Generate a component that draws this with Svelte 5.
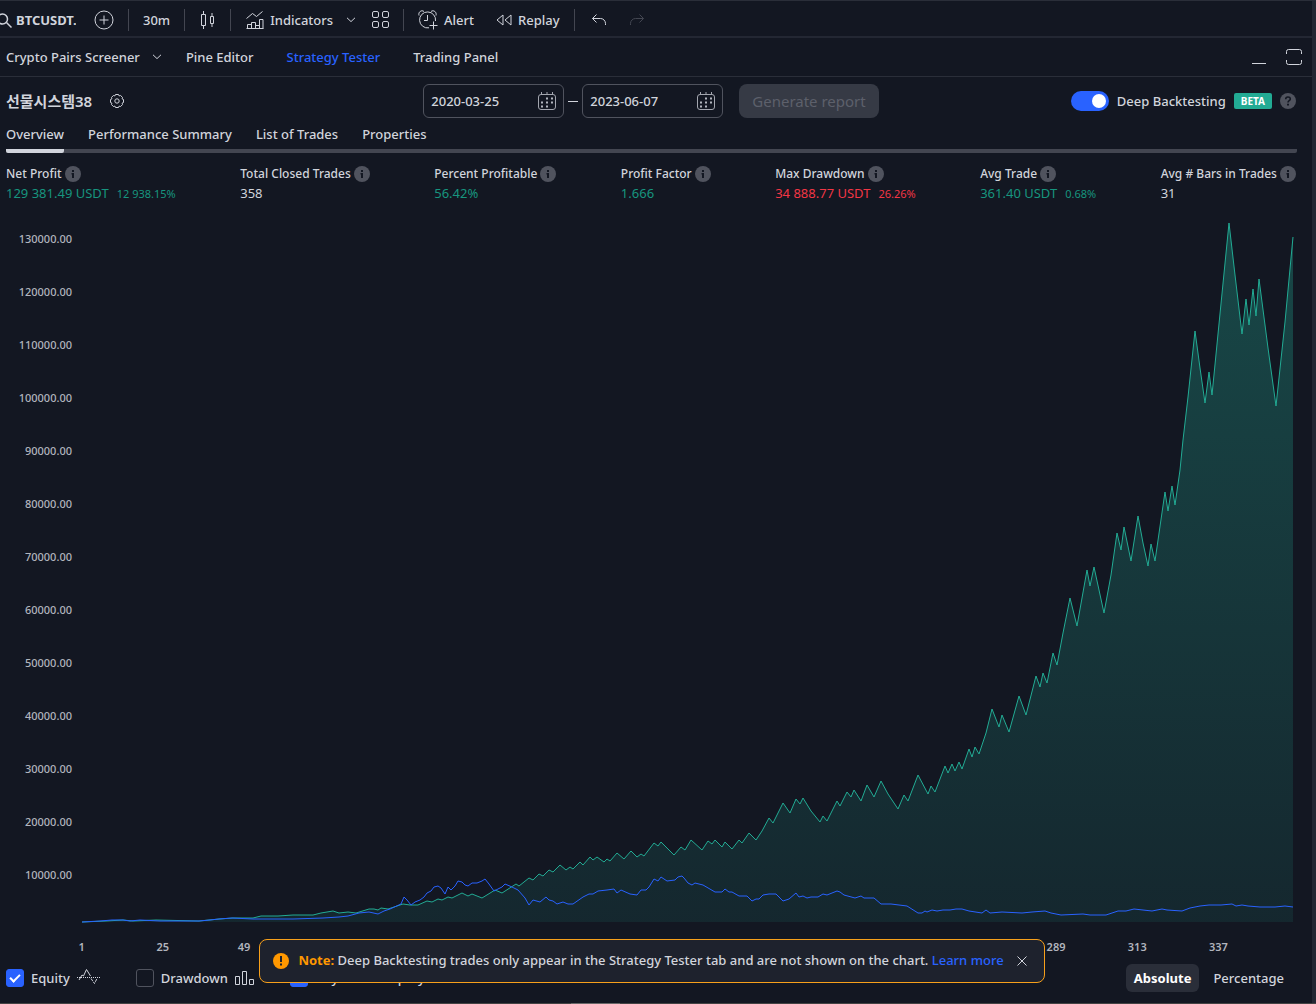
<script lang="ts">
  const metrics = [
    { label: 'Net Profit', value: '129 381.49 USDT', extra: '12 938.15%', tone: 'up' },
    { label: 'Total Closed Trades', value: '358', extra: '', tone: '' },
    { label: 'Percent Profitable', value: '56.42%', extra: '', tone: 'up' },
    { label: 'Profit Factor', value: '1.666', extra: '', tone: 'up' },
    { label: 'Max Drawdown', value: '34 888.77 USDT', extra: '26.26%', tone: 'down' },
    { label: 'Avg Trade', value: '361.40 USDT', extra: '0.68%', tone: 'up' },
    { label: 'Avg # Bars in Trades', value: '31', extra: '', tone: '' },
  ]

  const reports = ['Overview', 'Performance Summary', 'List of Trades', 'Properties']
  const yTicks = Array.from({ length: 13 }, (_, i) => `${13 - i}0000.00`)
  const xTicks = Array.from({ length: 15 }, (_, i) => 1 + i * 24)

  let report = $state('Overview')
  let unit = $state('Absolute')
  let from = $state('2020-03-25')
  let to = $state('2023-06-07')
  let deep = $state(true)
  let showEquity = $state(true)
  let showDrawdown = $state(false)
  let showHold = $state(true)
  let noteOpen = $state(true)

  const equity =
    '82,922 106,921 123,920 133,921 156,920 199,921 219,919 233,918 253,918 261,916 269,916 278,916 293,915 313,915 321,913 333,911 339,913 348,912 356,913 369,909 374,909 378,910 381,908 388,909 403,904 410,905 418,905 427,901 432,902 438,899 442,900 448,897 452,898 462,893 468,896 472,894 482,898 495,890 502,893 516,884 519,886 529,878 533,880 539,874 543,876 549,870 553,872 560,865 566,870 570,867 573,869 580,862 583,865 590,857 593,860 597,857 604,862 607,859 610,861 617,853 624,859 631,851 637,857 641,854 644,856 654,843 658,846 661,842 674,855 681,847 685,850 691,840 702,850 708,841 712,844 715,840 722,847 725,842 732,849 739,840 742,843 749,833 756,840 762,831 769,818 773,823 783,803 790,813 796,799 800,804 803,798 811,811 820,822 823,816 827,821 837,801 840,806 847,792 851,797 854,790 861,801 867,785 874,797 881,781 888,794 898,809 904,795 908,801 918,775 928,794 931,786 935,792 945,766 948,773 952,764 955,771 959,762 962,769 969,749 972,757 975,747 979,754 986,733 992,709 999,727 1002,715 1009,732 1019,696 1026,715 1036,676 1040,687 1043,673 1047,683 1053,653 1057,665 1063,633 1070,598 1077,626 1087,570 1090,586 1094,567 1104,613 1111,575 1117,533 1121,550 1124,527 1131,561 1138,516 1143,543 1148,566 1151,544 1155,561 1165,492 1168,511 1172,486 1175,505 1180,470 1183,440 1188,397 1195,331 1200,368 1205,403 1209,372 1212,395 1218,334 1229,223 1235,275 1242,334 1246,299 1249,325 1253,289 1256,316 1259,279 1268,348 1276,406 1285,322 1293,237'

  const hold =
    '82,922 100,921 112,920 123,920 130,921 140,920 160,921 199,921 210,920 219,919 232,918 253,919 293,919 323,918 339,917 348,916 359,913 369,912 378,914 384,911 390,909 401,904 404,897 407,900 411,905 415,902 420,900 424,897 427,893 431,891 434,887 438,886 441,888 445,894 448,887 451,890 455,886 458,881 462,882 465,885 468,886 472,883 477,883 482,881 485,879 489,884 494,891 502,887 505,884 512,887 518,890 525,898 529,905 533,900 540,902 546,897 549,900 553,901 557,904 563,902 568,904 573,904 583,897 589,894 593,894 598,891 607,890 614,889 617,893 621,890 630,894 637,895 641,890 646,890 649,887 654,879 658,881 661,877 667,881 675,880 678,877 682,876 684,878 688,883 692,885 695,883 703,885 715,892 722,892 725,889 729,892 732,892 739,896 747,896 752,901 756,899 759,899 763,895 769,894 776,894 780,898 783,901 789,899 796,893 799,897 803,896 807,898 811,897 818,897 823,894 827,895 837,891 840,892 844,895 855,898 861,896 864,898 874,898 881,904 891,904 907,906 918,913 922,913 925,911 927,912 932,910 937,911 943,910 950,910 956,909 962,909 969,911 982,913 986,910 990,913 1002,912 1022,913 1032,912 1045,911 1051,913 1061,915 1083,914 1090,915 1106,915 1118,911 1126,911 1134,909 1152,911 1162,909 1167,910 1182,911 1190,908 1200,906 1209,905 1221,905 1232,904 1236,906 1242,905 1248,906 1260,907 1275,907 1285,906 1293,907'

  const area = `82,922 ${equity} 1293,922`
</script>

{#snippet info()}
  <svg width="16" height="16" viewBox="0 0 16 16" aria-hidden="true">
    <circle cx="8" cy="8" r="8" fill="#50535e" />
    <path d="M7 4h2v2H7zM6.500 7H9v5H7V8.500h-.5z" fill="#131722" />
  </svg>
{/snippet}

{#snippet chevron()}
  <svg width="10" height="6" viewBox="0 0 10 6" fill="none" stroke="currentColor" aria-hidden="true"><path d="M1 .8l4 3.800L9 .8" /></svg>
{/snippet}

{#snippet calendar()}
  <svg width="18" height="19" viewBox="0 0 18 19" fill="none" stroke="#a3a6af" aria-hidden="true">
    <rect x=".5" y="2.500" width="17" height="15" rx="2.500" />
    <path d="M3.500 0v2.500M9 0v2.500M14.500 0v2.500" />
    <path d="M8 6.500h2M13 6.500h2M3 10.500h2M8 10.500h2M13 10.500h2M3 14.500h2M8 14.500h2" stroke-width="2" stroke="#b2b5be" />
  </svg>
{/snippet}

<div class="app">
  <div class="panel">
    <header class="toolbar">
      <button class="symbol">
        <svg width="12" height="16" viewBox="0 0 12 16" fill="none" stroke="currentColor" stroke-width="1.500" aria-hidden="true">
          <circle cx="2.500" cy="7" r="5" />
          <path d="M6.500 10.500l5 5" />
        </svg>
        <span>BTCUSDT.P</span>
      </button>
      <button class="compare" aria-label="Compare symbol">
        <svg width="20" height="20" viewBox="0 0 20 20" fill="none" stroke="currentColor">
          <circle cx="10" cy="10" r="9" />
          <path d="M10 5.500v9M5.500 10h9" />
        </svg>
      </button>
      <span class="sep"></span>
      <button>30m</button>
      <span class="sep"></span>
      <button aria-label="Candles">
        <svg width="17" height="20" viewBox="0 0 17 20" fill="none" stroke="currentColor">
          <path d="M2.500 4.500h4v11h-4zM4.500 1v3.500M4.500 15.500V19M11.500 6.500h3v7h-3zM13 3v3.500M13 13.500V17" />
        </svg>
      </button>
      <span class="sep"></span>
      <button>
        <svg width="19" height="18" viewBox="0 0 19 18" fill="none" stroke="currentColor" aria-hidden="true">
          <path d="M1.500 7.500l6-5 4 3 6-5M2.500 17.500v-4h4v4M6.500 17.500v-6h4v6M10.500 14.500h4v3M14.500 17.500v-9h3.500v9zM1.500 17.500h17" />
        </svg>
        Indicators
      </button>
      <button class="more" aria-label="Favorite indicators">{@render chevron()}</button>
      <button class="layout" aria-label="Templates">
        <svg width="18" height="18" viewBox="0 0 18 18" fill="none" stroke="currentColor">
          <rect x="1.500" y=".5" width="6" height="6" rx="1.500" />
          <rect x="11.500" y=".5" width="6" height="6" rx="1.500" />
          <rect x="1.500" y="10.500" width="6" height="6" rx="1.500" />
          <rect x="11.500" y="10.500" width="6" height="6" rx="1.500" />
        </svg>
      </button>
      <span class="sep"></span>
      <button>
        <svg width="20" height="20" viewBox="0 0 20 20" fill="none" stroke="currentColor" aria-hidden="true">
          <path d="M17.500 11A8 8 0 1 0 11 17.800M1 5.500C0 2 3.500-.5 6 1.500M18 5.500c1-3.500-2.500-6-5-4M9.500 5v5.500H6M15.500 11.500v8M11.500 15.500h8" />
        </svg>
        Alert
      </button>
      <button class="replay">
        <svg width="16" height="12" viewBox="0 0 16 12" fill="none" stroke="currentColor" aria-hidden="true">
          <path d="M7 1v10L1 6zM15 1v10L9 6z" />
        </svg>
        Replay
      </button>
      <span class="sep"></span>
      <button class="undo" aria-label="Undo">
        <svg width="14" height="12" viewBox="0 0 14 12" fill="none" stroke="currentColor">
          <path d="M4.500.5l-4 4 4 4M.5 4.500h8a5 5 0 0 1 5 5V11" />
        </svg>
      </button>
      <button class="redo" aria-label="Redo" disabled>
        <svg width="14" height="12" viewBox="0 0 14 12" fill="none" stroke="currentColor">
          <path d="M9.500.5l4 4-4 4M13.500 4.500h-8a5 5 0 0 0-5 5V11" />
        </svg>
      </button>
    </header>

    <nav class="tabs">
      <button class="screener">Crypto Pairs Screener {@render chevron()}</button>
      <button>Pine Editor</button>
      <button class="active">Strategy Tester</button>
      <button>Trading Panel</button>
      <div class="window">
        <button aria-label="Minimize">
          <svg width="14" height="16" viewBox="0 0 14 16" stroke="currentColor"><path d="M0 14.500h14" /></svg>
        </button>
        <button aria-label="Maximize">
          <svg width="16" height="16" viewBox="0 0 16 16" fill="none" stroke="currentColor">
            <path d="M.5 5V2.500a2 2 0 0 1 2-2h11a2 2 0 0 1 2 2V5M.5 11v2.500a2 2 0 0 0 2 2h11a2 2 0 0 0 2-2V11" />
          </svg>
        </button>
      </div>
    </nav>

    <section class="head">
      <div class="strategy">
        <h1>선물시스템38</h1>
        <button aria-label="Settings">
          <svg width="14" height="14" viewBox="0 0 14 14" fill="none" stroke="currentColor">
            <path
              d="M5.500.5h3l.6 1.400 1.500-.4 1.900 1.900-.4 1.500 1.400.6v3l-1.400.6.4 1.500-1.900 1.900-1.500-.4-.6 1.400h-3l-.6-1.400-1.500.4-1.900-1.900.4-1.500L.5 8.500v-3l1.400-.6-.4-1.500 1.900-1.900 1.500.4z"
            />
            <circle cx="7" cy="7" r="2.200" />
          </svg>
        </button>
      </div>
      <div class="range">
        <label class="date">
          <input type="text" aria-label="Start date" bind:value={from} />
          {@render calendar()}
        </label>
        <span class="dash"></span>
        <label class="date">
          <input type="text" aria-label="End date" bind:value={to} />
          {@render calendar()}
        </label>
        <button class="generate" disabled>Generate report</button>
      </div>
      <div class="deep">
        <label>
          <input class="switch" type="checkbox" role="switch" bind:checked={deep} />
          Deep Backtesting
        </label>
        <span class="beta">BETA</span>
        <svg width="16" height="16" viewBox="0 0 16 16" fill="none" aria-hidden="true">
          <circle cx="8" cy="8" r="8" fill="#50535e" />
          <path d="M5.700 6.200C5.700 3.200 10.300 3.300 10.300 6c0 1.700-2.300 1.700-2.300 3.500" stroke="#131722" stroke-width="1.600" />
          <path d="M7 10.800h2v1.800H7z" fill="#131722" />
        </svg>
      </div>
    </section>

    <nav class="reports">
      {#each reports as name}
        <button class:current={report === name} onclick={() => (report = name)}>{name}</button>
      {/each}
    </nav>

    <dl class="metrics">
      {#each metrics as m}
        <div>
          <dt>{m.label} {@render info()}</dt>
          <dd class={m.tone}>{m.value}{#if m.extra}<small>{m.extra}</small>{/if}</dd>
        </div>
      {/each}
    </dl>

    <div class="chart">
      <div class="yAxis">
        {#each yTicks as tick}
          <span>{tick}</span>
        {/each}
      </div>
      <svg class="plot" viewBox="82 212 1211 710" preserveAspectRatio="none" role="img" aria-label="Equity chart">
        <defs>
          <linearGradient id="equityFill" gradientUnits="userSpaceOnUse" x1="0" y1="223" x2="0" y2="922">
            <stop offset="0" stop-color="#22ab94" stop-opacity="0.33" />
            <stop offset="1" stop-color="#22ab94" stop-opacity="0.11" />
          </linearGradient>
        </defs>
        {#if showEquity}
          <polygon points={area} fill="url(#equityFill)" />
          <polyline points={equity} stroke="#22ab94" />
        {/if}
        {#if showHold}
          <polyline points={hold} stroke="#2962ff" />
        {/if}
      </svg>
    </div>
    <div class="xAxis">
      {#each xTicks as tick}
        <span>{tick}</span>
      {/each}
    </div>

    <footer class="legend">
      <label>
        <input class="check" type="checkbox" bind:checked={showEquity} />
        Equity
        <svg width="24" height="20" viewBox="0 0 24 20" fill="none" stroke="currentColor" aria-hidden="true">
          <path d="M0 9.500h24" stroke-dasharray="1 1" />
          <path d="M2 12l3-5 1.500 1L9.500 1.500l4 6.500" />
          <path d="M14 10.500l3.500 5 2.500-5" stroke-dasharray="3 1" />
        </svg>
      </label>
      <label>
        <input class="check" type="checkbox" bind:checked={showDrawdown} />
        Drawdown
        <svg width="20" height="15" viewBox="0 0 20 15" fill="none" stroke="currentColor" aria-hidden="true">
          <path d="M.5 5.500h4v8h-4zM7.500.5h4v13h-4zM14.500 8.500h4v5h-4z" />
        </svg>
      </label>
      <label>
        <input class="check" type="checkbox" bind:checked={showHold} />
        Buy &amp; hold equity
      </label>
      <div class="units">
        {#each ['Absolute', 'Percentage'] as name}
          <button class:selected={unit === name} onclick={() => (unit = name)}>{name}</button>
        {/each}
      </div>
    </footer>

    {#if noteOpen}
      <div class="noteWrap">
        <div class="note" role="status">
          <svg width="16" height="16" viewBox="0 0 16 16" aria-hidden="true">
            <circle cx="8" cy="8" r="8" fill="#ff9800" />
            <path d="M7 3h2v6H7zM7 10.500h2v2H7z" fill="#1e222d" />
          </svg>
          <p><strong>Note:</strong> Deep Backtesting trades only appear in the Strategy Tester tab and are not shown on the chart. <a href="#learn">Learn more</a></p>
          <button aria-label="Close" onclick={() => (noteOpen = false)}>
            <svg width="10" height="10" viewBox="0 0 10 10" stroke="currentColor"><path d="M.5.5l9 9M9.500.5l-9 9" /></svg>
          </button>
        </div>
      </div>
    {/if}
  </div>
  <div class="resizer"><span></span></div>
</div>

<style>
  :global(body) {
    background: #131722;
  }

  .app {
    min-height: 100vh;
    box-sizing: border-box;
    display: flex;
    flex-direction: column;
    border-top: 1px solid #2a2e39;
    background: #131722;
    color: #d1d4dc;
    font-family: 'Noto Sans', 'Noto Sans CJK KR', sans-serif;
    font-size: 13px;
    line-height: 18px;
  }

  .panel {
    position: relative;
    flex: 1;
    min-width: 0;
    display: flex;
    flex-direction: column;
    border-right: 4px solid #232733;
  }

  button {
    display: flex;
    align-items: center;
    gap: 6px;
    padding: 0;
    border: 0;
    background: none;
    color: inherit;
    font: inherit;
    white-space: nowrap;
    cursor: pointer;
  }

  svg {
    flex: none;
  }

  .toolbar {
    display: flex;
    align-items: center;
    box-sizing: border-box;
    height: 37px;
    padding-top: 2px;
    border-bottom: 2px solid #232733;
    font-weight: 500;
  }

  .symbol {
    gap: 4px;
    font-weight: 700;
  }

  .symbol span {
    width: 60px;
    overflow: hidden;
    text-align: left;
  }

  .compare {
    margin-left: 18px;
  }

  .sep {
    width: 1px;
    height: 22px;
    margin: 0 14px;
    background: #434651;
  }

  .more {
    margin-left: 13px;
  }

  .layout {
    margin-left: 15px;
  }

  .replay {
    margin-left: 22px;
  }

  .undo {
    margin-left: 3px;
  }

  .redo {
    margin-left: 24px;
    color: #434651;
  }

  .tabs {
    display: flex;
    align-items: center;
    gap: 33px;
    height: 38px;
    padding: 0 10px 0 6px;
    border-bottom: 1px solid #2a2e39;
    font-weight: 500;
  }

  .screener {
    gap: 12px;
    margin-right: -9px;
  }

  .active {
    color: #2962ff;
  }

  .window {
    display: flex;
    gap: 20px;
    margin-left: auto;
  }

  .head {
    display: grid;
    grid-template-columns: 1fr auto 1fr;
    align-items: center;
    height: 48px;
    padding: 0 16px 0 6px;
  }

  .strategy {
    display: flex;
    align-items: center;
    gap: 18px;
  }

  h1 {
    margin: 0;
    font-size: 15px;
    font-weight: 600;
  }

  .range {
    display: flex;
    align-items: center;
  }

  .date {
    display: flex;
    align-items: center;
    box-sizing: border-box;
    width: 141px;
    height: 34px;
    padding: 0 7px;
    border: 1px solid #50535e;
    border-radius: 6px;
  }

  .date input {
    flex: 1;
    min-width: 0;
    padding: 0;
    border: 0;
    outline: 0;
    background: none;
    color: inherit;
    font: inherit;
    font-weight: 500;
  }

  .dash {
    width: 10px;
    height: 1px;
    margin: 0 4px;
    background: #d1d4dc;
  }

  .generate {
    height: 34px;
    margin-left: 16px;
    padding: 0 13px;
    border-radius: 8px;
    background: #363a45;
    color: #5d606b;
    font-size: 15px;
  }

  .deep,
  .deep label {
    display: flex;
    align-items: center;
    gap: 8px;
  }

  .deep {
    justify-content: flex-end;
    font-weight: 500;
  }

  .switch {
    appearance: none;
    display: flex;
    align-items: center;
    box-sizing: border-box;
    width: 38px;
    height: 20px;
    margin: 0;
    padding: 0 3px;
    border-radius: 10px;
    background: #50535e;
  }

  .switch::after {
    content: '';
    width: 14px;
    height: 14px;
    border-radius: 50%;
    background: #fff;
  }

  .switch:checked {
    justify-content: flex-end;
    background: #2962ff;
  }

  .beta {
    padding: 0 7px;
    border-radius: 2px;
    background: #22ab94;
    color: #fff;
    font-size: 10px;
    font-weight: 700;
    line-height: 16px;
  }

  .reports {
    display: flex;
    gap: 24px;
    margin: 0 15px 0 6px;
    border-bottom: 4px solid #434651;
    border-radius: 0 0 2px 2px;
  }

  .reports button {
    height: 28px;
    margin-bottom: -4px;
    padding-bottom: 6px;
    border-bottom: 4px solid transparent;
    font-weight: 500;
  }

  .reports .current {
    border-bottom-color: #d1d4dc;
    border-radius: 2px;
  }

  .metrics {
    display: flex;
    justify-content: space-between;
    margin: 11px 16px 9px 6px;
  }

  dt {
    display: flex;
    align-items: center;
    gap: 3px;
    font-size: 12px;
    font-weight: 500;
    line-height: 20px;
    white-space: nowrap;
  }

  dd {
    margin: 0;
    white-space: nowrap;
  }

  dd small {
    margin-left: 8px;
    font-size: 11px;
  }

  .up {
    color: #17957f;
  }

  .down {
    color: #f23645;
  }

  .chart {
    flex: 1;
    display: flex;
    min-height: 400px;
    padding-right: 19px;
  }

  .yAxis {
    display: flex;
    flex-direction: column;
    box-sizing: border-box;
    width: 82px;
    padding-right: 10px;
    color: #b2b5be;
    font-size: 11px;
    font-weight: 500;
    text-align: right;
  }

  .yAxis span {
    flex: 53 0 0;
    display: flex;
    align-items: center;
    justify-content: flex-end;
  }

  .yAxis::after {
    content: '';
    flex: 21 0 0;
  }

  .plot {
    flex: 1;
    min-width: 0;
    width: 0;
    height: auto;
    overflow: visible;
  }

  .plot polyline {
    fill: none;
    stroke-width: 1;
    vector-effect: non-scaling-stroke;
  }

  .xAxis {
    display: flex;
    padding: 17px 19px 0 41px;
    color: #b2b5be;
    font-size: 11px;
    font-weight: 600;
    line-height: 15px;
    text-align: center;
  }

  .xAxis span {
    flex: 24 0 0;
  }

  .xAxis::after {
    content: '';
    flex: 10 0 0;
  }

  .legend {
    display: flex;
    align-items: center;
    gap: 35px;
    height: 48px;
    margin-bottom: 1px;
    padding: 0 20px 0 6px;
    font-weight: 500;
  }

  .legend label {
    display: flex;
    align-items: center;
    gap: 7px;
    white-space: nowrap;
  }

  .check {
    appearance: none;
    display: grid;
    place-items: center;
    box-sizing: border-box;
    width: 18px;
    height: 18px;
    margin: 0;
    border: 1px solid #50535e;
    border-radius: 3px;
  }

  .check:checked {
    border-color: #2962ff;
    background: #2962ff;
  }

  .check:checked::after {
    content: '';
    width: 8px;
    height: 4px;
    margin-bottom: 3px;
    border: solid #fff;
    border-width: 0 0 2px 2px;
    transform: rotate(-45deg);
  }

  .units {
    display: flex;
    gap: 6px;
    margin-left: auto;
  }

  .units button {
    height: 28px;
    padding: 0 8px;
    border-radius: 6px;
  }

  .units .selected {
    background: #2a2e39;
    color: #fff;
    font-weight: 700;
  }

  .noteWrap {
    position: absolute;
    left: 0;
    right: 8px;
    bottom: 20px;
    display: flex;
    justify-content: center;
  }

  .note {
    display: flex;
    align-items: center;
    height: 42px;
    padding: 0 17px 0 13px;
    border: 1px solid #f7a01b;
    border-radius: 8px;
    background: #1e222d;
    font-weight: 500;
  }

  .note p {
    margin: 0 13px 2px 9px;
  }

  .note strong {
    color: #ff9800;
  }

  .note a {
    color: #2962ff;
    text-decoration: none;
  }

  .resizer {
    display: flex;
    justify-content: center;
    height: 2px;
    padding-right: 126px;
    background: #434343;
  }

  .resizer span {
    width: 49px;
    background: #686868;
  }
</style>
